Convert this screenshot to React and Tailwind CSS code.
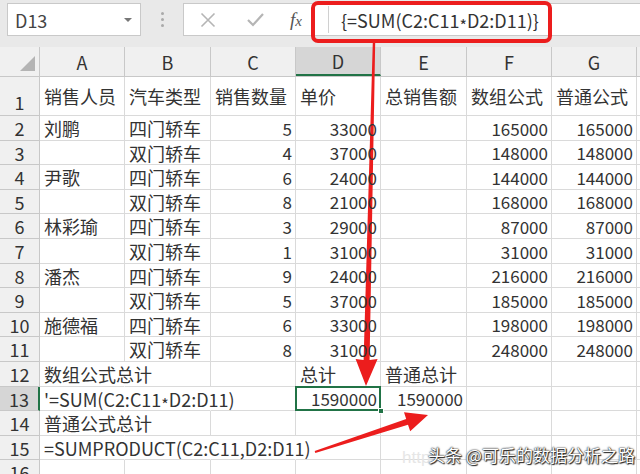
import React from 'react';

const COLS = [
  { k: 'A', w: 'w-[85px]' },
  { k: 'B', w: 'w-[86px]' },
  { k: 'C', w: 'w-[85px]' },
  { k: 'D', w: 'w-[85px]' },
  { k: 'E', w: 'w-[86px]' },
  { k: 'F', w: 'w-[85px]' },
  { k: 'G', w: 'w-[85px]' },
];

const HEIGHTS = ['h-[25px]', 'h-[24px]', 'h-[25px]', 'h-[24px]', 'h-[25px]', 'h-[25px]', 'h-[24px]', 'h-[25px]', 'h-[24px]', 'h-[25px]', 'h-[25px]', 'h-[24px]', 'h-[25px]', 'h-[24px]', 'h-[25px]'];

const ROWS = [
  ['刘鹏', '四门轿车', '5', '33000', '', '165000', '165000'],
  ['', '双门轿车', '4', '37000', '', '148000', '148000'],
  ['尹歌', '四门轿车', '6', '24000', '', '144000', '144000'],
  ['', '双门轿车', '8', '21000', '', '168000', '168000'],
  ['林彩瑜', '四门轿车', '3', '29000', '', '87000', '87000'],
  ['', '双门轿车', '1', '31000', '', '31000', '31000'],
  ['潘杰', '四门轿车', '9', '24000', '', '216000', '216000'],
  ['', '双门轿车', '5', '37000', '', '185000', '185000'],
  ['施德福', '四门轿车', '6', '33000', '', '198000', '198000'],
  ['', '双门轿车', '8', '31000', '', '248000', '248000'],
  [{ t: '数组公式总计', nr: true }, '', '', '总计', '普通总计', '', ''],
  [{ t: "'=SUM(C2:C11*D2:D11)", nr: true }, { t: '', nr: true }, '', { t: '1590000', sel: true }, '1590000', '', ''],
  [{ t: '普通公式总计', nr: true }, '', '', '', '', '', ''],
  [{ t: '=SUMPRODUCT(C2:C11,D2:D11)', nr: true }, { t: '', nr: true }, { t: '', nr: true }, '', '', '', ''],
  ['', '', '', '', '', '', ''],
];

function Txt({ t }) {
  if (!t.includes('*')) return t;
  const parts = t.split('*');
  return (
    <>
      {parts[0]}
      <span className="relative top-[4px] text-[16px]">*</span>
      {parts[1]}
    </>
  );
}

function Cell({ w, v }) {
  const o = typeof v === 'string' ? { t: v } : v;
  const isNum = /^\d+$/.test(o.t);
  return (
    <div
      className={`${w} relative shrink-0 h-full flex items-center border-b border-[#dadada] ${o.nr ? 'border-r border-r-transparent' : 'border-r'} ${isNum ? 'justify-end pr-[3px] text-[17px]' : 'justify-start pl-[4px] text-[18px]'} whitespace-nowrap overflow-visible`}
    >
      <span className="relative z-10">
        <Txt t={o.t} />
      </span>
      {o.sel && (
        <>
          <div className="absolute left-[-1px] top-[-1px] right-[-1px] bottom-[-1px] border-2 border-[#217346] z-20" />
          <div className="absolute right-[-4px] bottom-[-4px] w-[6px] h-[6px] bg-[#217346] border border-white z-30" />
        </>
      )}
    </div>
  );
}

export default function App() {
  return (
    <div className="relative w-[640px] h-[474px] overflow-hidden bg-white text-[#333] font-['Noto_Sans_CJK_SC',sans-serif] text-[18px] leading-none">
      {/* top bar */}
      <div className="h-[47px] bg-[#e9e9e9] flex items-start pt-[3px] pl-[7px]">
        <div className="w-[134px] h-[33px] bg-white border border-[#c9c9c9] flex items-center justify-between pl-[7px] pr-[8px] text-[#444]">
          <span>D13</span>
          <span className="w-0 h-0 border-l-[4px] border-r-[4px] border-t-[4px] border-l-transparent border-r-transparent border-t-[#777]" />
        </div>
        <div className="w-[42px] h-[33px] flex flex-col items-center justify-center gap-[3px]">
          <span className="w-[3px] h-[3px] rounded-full bg-[#aaa]" />
          <span className="w-[3px] h-[3px] rounded-full bg-[#aaa]" />
          <span className="w-[3px] h-[3px] rounded-full bg-[#aaa]" />
        </div>
        <div className="flex-1 h-[33px] bg-white border border-[#c9c9c9] border-r-0 flex items-center">
          <div className="w-[144px] h-full flex items-center shrink-0">
            <svg className="ml-[16px]" width="16" height="16" viewBox="0 0 16 16">
              <path d="M1.5 1.5 L14.5 14.5 M14.5 1.5 L1.5 14.5" stroke="#b5b5b5" strokeWidth="1.6" fill="none" />
            </svg>
            <svg className="ml-[31px]" width="17" height="15" viewBox="0 0 17 15">
              <path d="M1 8 L6 13 L16 2" stroke="#b5b5b5" strokeWidth="2.2" fill="none" />
            </svg>
            <span className="ml-[26px] font-['Liberation_Serif',serif] italic text-[19px] text-[#555]">
              f<span className="text-[15px]">x</span>
            </span>
          </div>
          <div className="w-px h-[27px] bg-[#d0d0d0]" />
          <span className="pl-[12px] text-[#333] whitespace-nowrap">
            <Txt t="{=SUM(C2:C11*D2:D11)}" />
          </span>
        </div>
      </div>

      {/* column header */}
      <div className="h-[30px] flex bg-[#f0f0f0] border-b border-[#c8c8c8]">
        <div className="w-[40px] h-full shrink-0 border-r border-[#c8c8c8] relative">
          <div className="absolute right-[4px] bottom-[5px] w-0 h-0 border-l-[15px] border-t-[15px] border-l-transparent border-t-transparent border-b-0 border-r-0 [border-bottom:15px_solid_#b4b4b4]" />
        </div>
        {COLS.map((c) => (
          <div
            key={c.k}
            className={`${c.w} shrink-0 h-full flex items-center justify-center border-r border-[#c8c8c8] ${c.k === 'D' ? 'bg-[#d6d6d6] border-b-2 border-b-[#217346]' : ''}`}
          >
            {c.k}
          </div>
        ))}
        <div className="flex-1" />
      </div>

      {/* row 1 */}
      <div className="h-[39px] flex">
        <div className="w-[40px] shrink-0 h-full bg-[#f0f0f0] border-r border-b border-[#c8c8c8] flex items-end justify-center pb-[4px]">1</div>
        {['销售人员', '汽车类型', '销售数量', '单价', '总销售额', '数组公式', '普通公式'].map((t, i) => (
          <Cell key={i} w={COLS[i].w} v={t} />
        ))}
        <div className="flex-1 border-b border-[#dadada]" />
      </div>

      {ROWS.map((r, ri) => {
        const n = ri + 2;
        const sel = n === 13;
        return (
          <div key={n} className={`${HEIGHTS[ri]} flex`}>
            <div className={`w-[40px] shrink-0 h-full border-b border-[#c8c8c8] flex items-center justify-center ${sel ? 'bg-[#d6d6d6] border-r-2 border-r-[#217346]' : 'bg-[#f0f0f0] border-r border-r-[#c8c8c8]'}`}>
              {n}
            </div>
            {r.map((v, i) => (
              <Cell key={i} w={COLS[i].w} v={v} />
            ))}
            <div className="flex-1 border-b border-[#dadada]" />
          </div>
        );
      })}

      {/* red highlight box around formula */}
      <div className="absolute left-[311px] top-[1px] w-[241px] h-[42px] border-[4px] border-[#ec1d1d] rounded-[7px]" />

      {/* arrows */}
      <svg className="absolute left-0 top-0 pointer-events-none" width="640" height="474" viewBox="0 0 640 474">
        <polygon points="372.8,42 375.2,42 369.6,360 377.6,359 366,386 355.6,359 363.6,360" fill="#ec1d1d" />
        <polygon points="314.7,451 406.2,418.9 404,412.3 428,415 410.2,431.3 408,424.7 315.3,453" fill="#ec1d1d" />
      </svg>

      {/* watermark */}
      <div className="absolute left-[402px] top-[449px] text-[17px] text-[#e6e6e6] font-['Liberation_Sans',sans-serif]">http</div>
      <div className="absolute left-[428px] top-[446px] text-[17px] text-white whitespace-nowrap [text-shadow:0_0_2px_#222,0_0_1px_#222,1px_1px_1px_#222]">
        头条 @可乐的数据分析之路
      </div>
    </div>
  );
}
